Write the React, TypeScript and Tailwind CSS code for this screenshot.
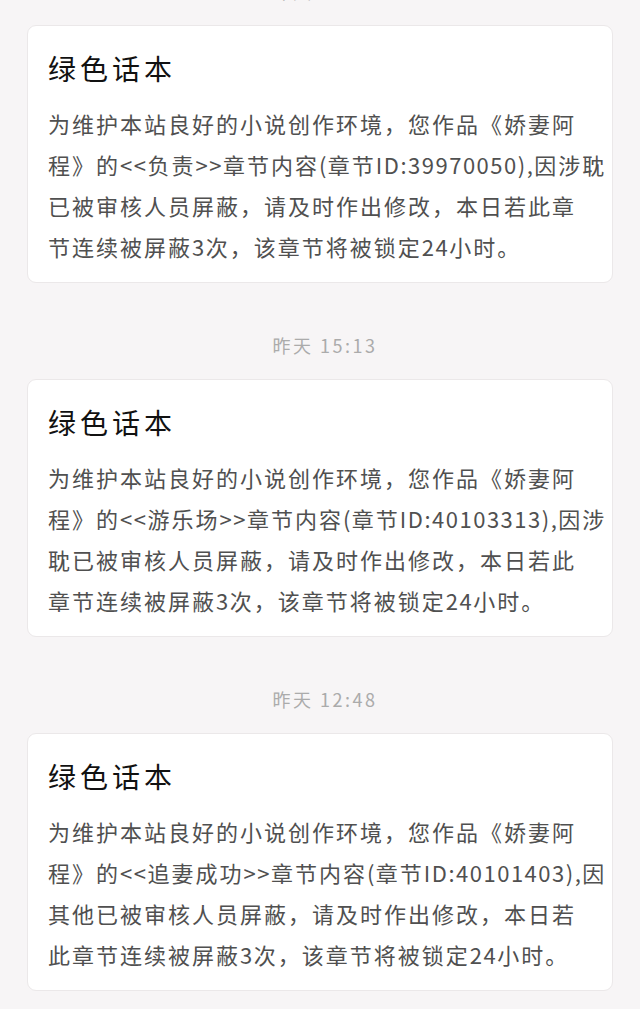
import React from "react";

const FONT = { fontFamily: '"Noto Sans CJK SC", "Noto Sans", sans-serif' };

type Msg = { time: string; lines: string[] };

const msgs: Msg[] = [
  {
    time: "昨天 15:40",
    lines: [
      "为维护本站良好的小说创作环境，您作品《娇妻阿",
      "程》的<<负责>>章节内容(章节ID:39970050),因涉耽",
      "已被审核人员屏蔽，请及时作出修改，本日若此章",
      "节连续被屏蔽3次，该章节将被锁定24小时。",
    ],
  },
  {
    time: "昨天 15:13",
    lines: [
      "为维护本站良好的小说创作环境，您作品《娇妻阿",
      "程》的<<游乐场>>章节内容(章节ID:40103313),因涉",
      "耽已被审核人员屏蔽，请及时作出修改，本日若此",
      "章节连续被屏蔽3次，该章节将被锁定24小时。",
    ],
  },
  {
    time: "昨天 12:48",
    lines: [
      "为维护本站良好的小说创作环境，您作品《娇妻阿",
      "程》的<<追妻成功>>章节内容(章节ID:40101403),因",
      "其他已被审核人员屏蔽，请及时作出修改，本日若",
      "此章节连续被屏蔽3次，该章节将被锁定24小时。",
    ],
  },
];

function Line({ text }: { text: string }) {
  const parts = text.split(/([A-Za-z0-9<>():,]+)/).filter((p) => p.length);
  return (
    <div className="h-[41px] leading-[41px] whitespace-nowrap">
      {parts.map((p, i) =>
        /^[A-Za-z0-9<>():,]+$/.test(p) ? (
          <span key={i} className="tracking-[1.5px]">
            {p}
          </span>
        ) : (
          <span key={i}>{p}</span>
        )
      )}
    </div>
  );
}

export default function App() {
  return (
    <div className="min-h-[1009px] w-[640px] bg-[#f7f5f6] overflow-hidden" style={FONT}>
      <div className="-mt-[21px] flex flex-col">
        {msgs.map((m, i) => (
          <div key={i} className={i === 0 ? "flex flex-col" : "mt-[50px] flex flex-col"}>
            <div className="h-[24px] leading-[24px] text-center text-[18px] text-[#ababab] tracking-[2.5px] pl-[10px]">
              {m.time}
            </div>
            <div className="mt-[22px] mx-[27px] h-[258px] rounded-[9px] border border-[#ebe8e9] bg-white pl-[20px] pt-[24px]">
              <div className="h-[36px] leading-[36px] text-[28px] tracking-[4px] text-[#111111]">
                绿色话本
              </div>
              <div className="mt-[17px] text-[22px] tracking-[2px] text-[#505050]">
                {m.lines.map((l, j) => (
                  <Line key={j} text={l} />
                ))}
              </div>
            </div>
          </div>
        ))}
      </div>
    </div>
  );
}
